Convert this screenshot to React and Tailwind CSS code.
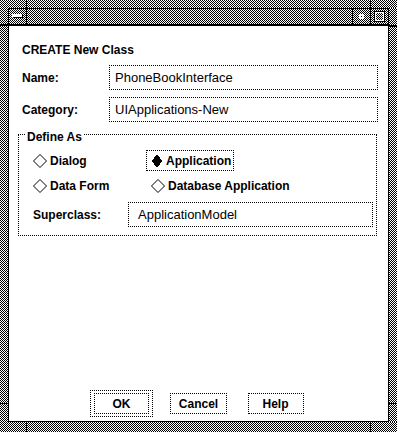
import React, { useId } from "react";

// 1px checker texture of the window frame, drawn as an svg pattern
function Dither({ w, h, children }) {
  const id = "d" + useId().replace(/[^a-zA-Z0-9]/g, "");
  return (
    <svg width={w} height={h} className="block shrink-0" shapeRendering="crispEdges">
      <defs>
        <pattern id={id} width="2" height="2" patternUnits="userSpaceOnUse">
          <rect width="2" height="2" fill="#fff" />
          <rect width="1" height="1" fill="#000" />
          <rect x="1" y="1" width="1" height="1" fill="#000" />
        </pattern>
      </defs>
      <rect width={w} height={h} fill={`url(#${id})`} />
      {children}
    </svg>
  );
}

function Diamond({ on }) {
  if (on) {
    return (
      <svg width="12" height="14" viewBox="0 0 12 14" shapeRendering="crispEdges">
        <path d="M6 0.5 L11.5 7 L6 13.5 L0.5 7 Z" fill="#000" />
      </svg>
    );
  }
  return (
    <svg width="14" height="14" viewBox="0 0 14 14">
      <path d="M7 0.5 L13.5 7 L7 13.5 L0.5 7 Z" fill="#fff" stroke="#000" strokeWidth="1" />
    </svg>
  );
}

function Radio({ label, on, focus, width }) {
  return (
    <div
      className={`flex items-center gap-[3px] h-[21px] pl-[4px] pr-[2px] border border-dotted text-[12px] font-bold ${
        focus ? "border-black" : "border-transparent"
      } ${width || ""}`}
    >
      <Diamond on={on} />
      <span>{label}</span>
    </div>
  );
}

function Field({ label, value }) {
  return (
    <div className="flex items-center h-[25px] ml-[13px] mr-[10px]">
      <div className="w-[87px] text-[12px] font-bold">{label}</div>
      <div className="flex-1 h-full flex items-center pl-[5px] border border-dotted border-black text-[13px]">
        {value}
      </div>
    </div>
  );
}

function Button({ children, wide }) {
  return (
    <div
      className={`flex items-center justify-center h-[21px] border border-dotted border-black text-[12px] font-bold ${wide}`}
    >
      {children}
    </div>
  );
}

export default function App() {
  return (
    <div className="relative flex flex-col w-[397px] h-[432px] bg-white">
      <Dither w={397} h={8} />
      <div className="flex">
        <Dither w={8} h={414} />

        <div className="flex flex-col w-[381px] h-[414px] border border-black bg-white font-['Liberation_Sans',Arial,sans-serif] text-black">
          {/* title bar */}
          <div className="flex h-[15px]">
            <Dither w={17} h={15}>
              <rect x="3" y="5" width="10" height="3" fill="#fff" />
              <rect x="4" y="8" width="10" height="1" fill="#000" />
              <rect x="13" y="5" width="1" height="4" fill="#000" />
            </Dither>
            <div className="w-px bg-black" />
            <Dither w={325} h={15} />
            <div className="w-px bg-black" />
            <Dither w={17} h={15}>
              <rect x="6" y="5" width="5" height="5" fill="#fff" />
              <rect x="8" y="7" width="1" height="1" fill="#000" />
            </Dither>
            <div className="w-px bg-black" />
            <Dither w={17} h={15}>
              <rect x="3.5" y="2.5" width="10" height="10" fill="none" stroke="#000" />
              <rect x="4.5" y="3.5" width="8" height="8" fill="none" stroke="#fff" />
            </Dither>
          </div>
          <div className="h-[2px] bg-black" />

          {/* content */}
          <div className="flex-1 flex flex-col">
            <div className="mt-[17px] ml-[13px] text-[12px] leading-[14px] font-bold">
              CREATE New Class
            </div>
            <div className="mt-[8px]">
              <Field label="Name:" value="PhoneBookInterface" />
            </div>
            <div className="mt-[7px]">
              <Field label="Category:" value="UIApplications-New" />
            </div>

            <div className="relative mt-[12px] ml-[9px] w-[359px] h-[102px] border border-dotted border-black pt-[15px] pl-[9px] pr-[3px]">
              <div className="absolute left-[6px] -top-[5px] px-[2px] bg-white text-[12px] leading-[14px] font-bold">
                Define As
              </div>
              <div className="flex">
                <Radio label="Dialog" width="w-[118px]" />
                <Radio label="Application" on focus />
              </div>
              <div className="flex mt-[4px]">
                <Radio label="Data Form" width="w-[118px]" />
                <Radio label="Database Application" />
              </div>
              <div className="flex items-center h-[25px] mt-[6px]">
                <div className="w-[100px] pl-[5px] text-[12px] font-bold">Superclass:</div>
                <div className="flex-1 h-full flex items-center pl-[9px] border border-dotted border-black text-[13px]">
                  ApplicationModel
                </div>
              </div>
            </div>

            <div className="mt-auto mb-[4px] grid grid-cols-[77px_77px_77px] justify-center items-center h-[27px]">
              <div className="justify-self-center border border-dotted border-black px-[3px] py-[2px]">
                <Button wide="w-[55px]">OK</Button>
              </div>
              <div className="justify-self-center">
                <Button wide="w-[57px]">Cancel</Button>
              </div>
              <div className="justify-self-center">
                <Button wide="w-[56px]">Help</Button>
              </div>
            </div>
          </div>
        </div>

        <Dither w={8} h={414} />
      </div>
      <Dither w={397} h={10} />

      {/* resize corner marks */}
      <div className="absolute left-[26px] top-0 w-px h-[8px] bg-black" />
      <div className="absolute left-[370px] top-0 w-px h-[8px] bg-black" />
      <div className="absolute left-0 top-[24px] w-[8px] h-[2px] bg-black" />
      <div className="absolute left-[389px] top-[25px] w-[8px] h-[2px] bg-black" />
      <div className="absolute left-0 top-[403px] w-[8px] h-px bg-black" />
      <div className="absolute left-[389px] top-[403px] w-[8px] h-px bg-black" />
      <div className="absolute left-[26px] top-[422px] w-px h-[10px] bg-black" />
      <div className="absolute left-[370px] top-[422px] w-px h-[10px] bg-black" />
    </div>
  );
}
